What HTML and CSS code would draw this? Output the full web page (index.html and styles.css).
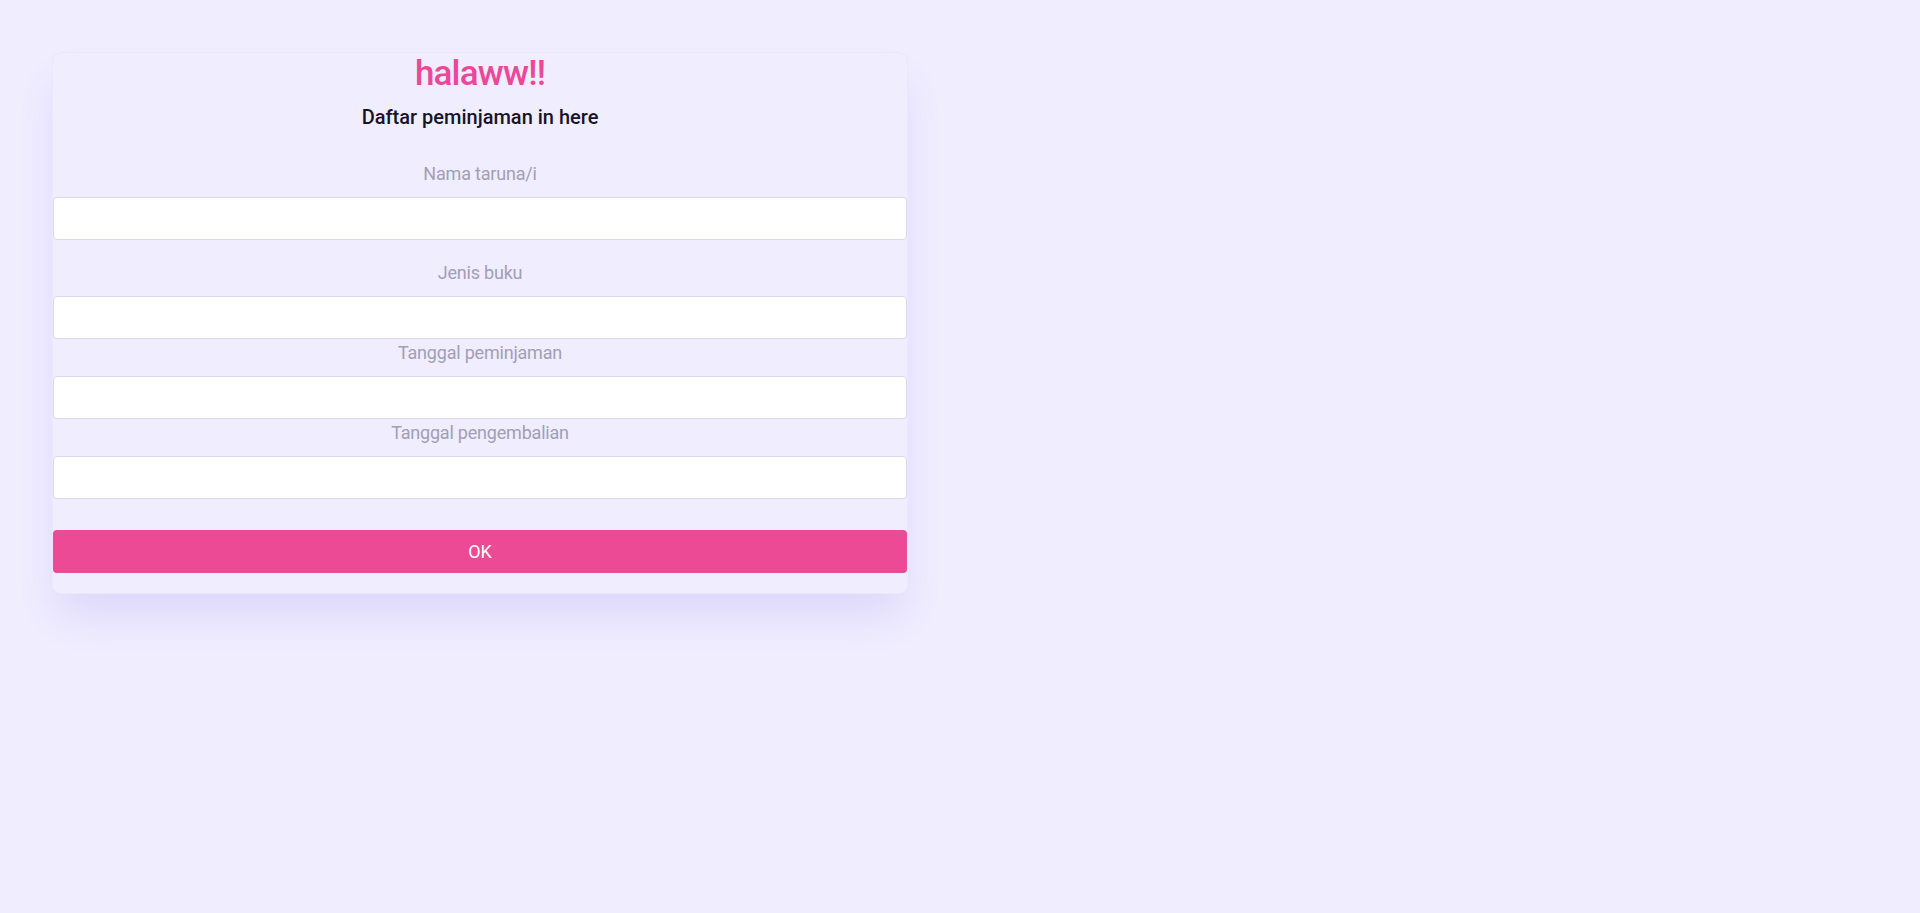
FILE: index.html
```html
<!DOCTYPE html>
<html lang="id">
<head>
<meta charset="utf-8">
<title>halaww!!</title>
<link rel="stylesheet" href="styles.css">
</head>
<body>
<main class="page">
  <form class="card">
    <h1 class="title">halaww!!</h1>
    <h3 class="subtitle">Daftar peminjaman in here</h3>
    <div class="field field-first">
      <label class="label" for="nama">Nama taruna/i</label>
      <input class="input" id="nama" type="text">
    </div>
    <div class="field">
      <label class="label" for="jenis">Jenis buku</label>
      <input class="input" id="jenis" type="text">
    </div>
    <div class="field">
      <label class="label" for="pinjam">Tanggal peminjaman</label>
      <input class="input" id="pinjam" type="text">
    </div>
    <div class="field">
      <label class="label" for="kembali">Tanggal pengembalian</label>
      <input class="input" id="kembali" type="text">
    </div>
    <button class="btn" type="button">OK</button>
  </form>
</main>
</body>
</html>
```

FILE: styles.css
```css
* { box-sizing: border-box; }

html, body {
  margin: 0;
  padding: 0;
  background: #f0edff;
  font-family: Roboto, "Liberation Sans", Arial, sans-serif;
}

.page {
  padding: 53px;
  min-height: 913px;
}

.card {
  width: 854px;
  display: flex;
  flex-direction: column;
  background: #f0edfe;
  border-radius: 8px;
  box-shadow: 0 0 0 1px #ebe8fb, 0 26px 40px -6px rgba(110, 95, 210, 0.16);
  padding: 0 0 20px;
}

.title {
  margin: 0;
  font-size: 35px;
  line-height: 42px;
  font-weight: 500;
  color: #ec4899;
  text-align: center;
  letter-spacing: -0.8px;
}

.subtitle {
  margin: 10px 0 34px;
  font-size: 20px;
  line-height: 24px;
  font-weight: 500;
  color: #16142b;
  text-align: center;
}

.field {
  display: flex;
  flex-direction: column;
  margin-top: 3px;
}

.field-first { margin-top: 0; margin-bottom: 19px; }

.label {
  display: block;
  font-size: 18px;
  line-height: 22px;
  letter-spacing: -0.2px;
  color: #a29eb5;
  text-align: center;
  margin-bottom: 12px;
}

.input {
  display: block;
  width: 100%;
  height: 43px;
  margin: 0;
  background: #ffffff;
  border: 1px solid #dcd8f4;
  border-radius: 4px;
  padding: 0 12px;
  font: inherit;
}

.btn {
  margin-top: 31px;
  height: 43px;
  width: 100%;
  border: 0;
  border-radius: 4px;
  background: #ec4a94;
  color: #ffffff;
  font-family: Roboto, "Liberation Sans", Arial, sans-serif;
  font-size: 18px;
}
```
